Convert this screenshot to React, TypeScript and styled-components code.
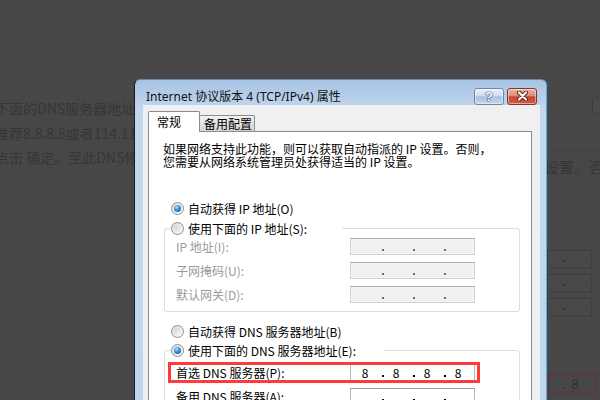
import React from 'react';
import styled, { createGlobalStyle } from 'styled-components';

const GlobalStyle = createGlobalStyle`
  html, body {
    margin: 0;
    padding: 0;
  }
  body {
    width: 600px;
    height: 400px;
    overflow: hidden;
    background: #474747;
    font-family: "Noto Sans CJK SC", "Noto Sans", sans-serif;
  }
`;

const Page = styled.div`
  position: relative;
  width: 600px;
  height: 400px;
  overflow: hidden;
  background: #474747;
`;

/* ---------- dimmed page behind the dialog ---------- */

const Backdrop = styled.div`
  display: flex;
  flex-direction: column;
  height: 100%;
`;

const Rule = styled.div`
  margin-top: 86px;
  height: 1px;
  background: #4c4c4c;
`;

const Columns = styled.div`
  display: grid;
  grid-template-columns: 1fr 53px;
`;

const Article = styled.div`
  margin: 9px 0 0 -5px;
  font-size: 14px;
  line-height: 24.5px;
  color: #363636;
  white-space: nowrap;
`;

const GhostShot = styled.div`
  display: flex;
  flex-direction: column;
  overflow: hidden;
`;

const GhostButton = styled.div`
  margin: 10px 0 0 45px;
  width: 20px;
  height: 15px;
  border: 1px solid #3d3d3d;
  border-radius: 3px;
  background: #4a4a4a;
`;

const GhostLine = styled.div`
  margin-top: 30px;
  height: 1px;
  background: #4c4c4c;
`;

const GhostText = styled.div`
  margin: 12px 0 0 -3px;
  font-size: 15px;
  line-height: 20px;
  color: #363636;
  white-space: nowrap;
`;

const GhostFields = styled.div`
  margin-top: 73px;
  display: flex;
  flex-direction: column;
  gap: 6px;
`;

const GhostField = styled.div`
  position: relative;
  width: 45px;
  height: 18px;
  box-sizing: border-box;
  border: 1px solid #3e3e3e;
  background: #494949;
  &::after {
    content: '';
    position: absolute;
    left: 15px;
    bottom: 5px;
    width: 2px;
    height: 2px;
    background: #333;
  }
`;

const GhostHighlight = styled.div`
  margin-top: 57px;
  width: 50px;
  height: 21px;
  box-sizing: border-box;
  border: 3px solid #583b3b;
  font-size: 13px;
  line-height: 15px;
  color: #303030;
  padding-left: 12px;
  white-space: nowrap;
`;

/* ---------- the dialog ---------- */

const Dialog = styled.div`
  position: absolute;
  left: 134px;
  top: 79px;
  width: 413px;
  height: 330px;
  box-sizing: border-box;
  border: 1px solid #1a1a1a;
  border-top-color: #6f86a3;
  border-right-color: #4fb3e8;
  border-radius: 6px 6px 0 0;
  background: linear-gradient(to bottom, #a7c3e4 0px, #b7cfea 18px, #c1d8ef 30px, #bfd6ee 100%);
  display: flex;
  flex-direction: column;
`;

const TitleBar = styled.div`
  height: 29px;
  box-sizing: border-box;
  padding: 7px 9px 0 11px;
  display: flex;
  align-items: center;
`;

const TitleText = styled.div`
  flex: 1;
  font-family: "Noto Sans", "Noto Sans CJK SC", sans-serif;
  font-size: 12px;
  color: #111;
  white-space: nowrap;
`;

const CaptionButtons = styled.div`
  display: flex;
  gap: 3px;
`;

const CaptionButton = styled.div<{ $variant: 'help' | 'close' }>`
  width: 30px;
  height: 17px;
  box-sizing: border-box;
  border: 1px solid ${p => (p.$variant === 'close' ? '#83372b' : '#6d87a8')};
  border-radius: 3px;
  background: ${p =>
    p.$variant === 'close'
      ? 'linear-gradient(to bottom, #ebb4a6 0%, #dc8b79 45%, #c7472f 52%, #cf5d46 100%)'
      : 'linear-gradient(to bottom, #eaf1f9 0%, #cddcee 45%, #aac3e0 52%, #c2d6ec 100%)'};
  box-shadow: inset 0 0 0 1px rgba(255, 255, 255, 0.45);
  display: flex;
  align-items: center;
  justify-content: center;
`;

const HelpGlyph = styled.span`
  font-family: "Liberation Sans", sans-serif;
  font-weight: bold;
  font-size: 13px;
  line-height: 13px;
  color: #fff;
  text-shadow: 0 0 1px #2c3e55, 0 0 1px #2c3e55, 0 0 1px #2c3e55;
`;

const ClientArea = styled.div`
  flex: 1;
  margin: 0 6px 0 8px;
  padding: 6px 8px 0 5px;
  background: #f0f0f0;
  display: flex;
  flex-direction: column;
`;

const TabStrip = styled.div`
  height: 20px;
  display: flex;
  align-items: flex-end;
`;

const Tab = styled.div<{ $active?: boolean }>`
  position: relative;
  z-index: ${p => (p.$active ? 1 : 0)};
  box-sizing: border-box;
  width: ${p => (p.$active ? 52 : 56)}px;
  height: ${p => (p.$active ? 21 : 16)}px;
  margin-bottom: ${p => (p.$active ? -1 : 0)}px;
  margin-left: ${p => (p.$active ? 0 : -1)}px;
  padding-left: ${p => (p.$active ? 8 : 4)}px;
  border: 1px solid #898c95;
  border-bottom: none;
  border-radius: 2px 2px 0 0;
  background: ${p => (p.$active ? '#fff' : 'linear-gradient(to bottom, #f2f2f2, #e2e2e2 50%, #d4d4d4)')};
  font-size: 12px;
  line-height: 14px;
  color: #000;
  display: flex;
  align-items: center;
  white-space: nowrap;
`;

const TabPanel = styled.div`
  flex: 1;
  border: 1px solid #898c95;
  background: #fff;
  padding: 10px 11px 0 14px;
  display: flex;
  flex-direction: column;
`;

const Intro = styled.p`
  margin: 0;
  font-size: 12px;
  line-height: 13px;
  color: #000;
  white-space: nowrap;
`;

const RadioRow = styled.div<{ $height: number; $gap: number }>`
  margin-top: ${p => p.$gap}px;
  height: ${p => p.$height}px;
  padding-left: 8px;
  display: flex;
  align-items: center;
  gap: 4px;
`;

const RadioDot = styled.span<{ $checked?: boolean }>`
  flex: none;
  width: 13px;
  height: 13px;
  box-sizing: border-box;
  border-radius: 50%;
  border: 1px solid #8c8e90;
  background: linear-gradient(135deg, #dcdcdc, #fbfbfb);
  display: flex;
  align-items: center;
  justify-content: center;
  &::after {
    content: '';
    width: 7px;
    height: 7px;
    border-radius: 50%;
    background: ${p =>
      p.$checked
        ? 'radial-gradient(circle at 38% 32%, #b5e0fb 0, #3f94d8 40%, #14508f 100%)'
        : 'linear-gradient(135deg, #d2d2d2, #f4f4f4)'};
  }
`;

const RadioText = styled.span`
  font-size: 12px;
  color: #000;
  white-space: nowrap;
`;

const Group = styled.fieldset`
  margin: 0 0 0 1px;
  padding: 0;
  min-width: 0;
  border: 1px solid #d5dfe5;
  border-radius: 3px;
`;

const Legend = styled.legend<{ $width: number }>`
  margin-left: 6px;
  padding: 0;
  width: ${p => p.$width}px;
  height: 20px;
  display: flex;
  align-items: center;
  gap: 4px;
`;

const FieldList = styled.div<{ $top: number }>`
  padding: ${p => p.$top}px 0 8px;
  display: flex;
  flex-direction: column;
  gap: 7px;
`;

const FieldRow = styled.div`
  position: relative;
  height: 17px;
  padding-left: 11px;
  display: grid;
  grid-template-columns: 174px 125px;
  align-items: center;
`;

const FieldLabel = styled.span<{ $disabled?: boolean }>`
  font-size: 12px;
  color: ${p => (p.$disabled ? '#9a9a9a' : '#000')};
  white-space: nowrap;
`;

const IpBox = styled.div<{ $disabled?: boolean }>`
  width: 125px;
  height: 17px;
  box-sizing: border-box;
  padding-left: 2px;
  border: 1px solid ${p => (p.$disabled ? '#cfcfcf' : '#b5b7bd')};
  border-top-color: ${p => (p.$disabled ? '#ababab' : '#9a9ca3')};
  background: ${p => (p.$disabled ? '#f0f0f0' : '#fff')};
  box-shadow: inset 0 0 0 1px ${p => (p.$disabled ? '#f7f7f7' : '#fff')};
  display: flex;
`;

const Octet = styled.span`
  width: 24px;
  font-size: 12px;
  line-height: 15px;
  text-align: center;
  color: #000;
`;

const Sep = styled.span<{ $disabled?: boolean }>`
  width: 7px;
  padding-bottom: 3px;
  box-sizing: border-box;
  display: flex;
  align-items: flex-end;
  justify-content: flex-end;
  &::after {
    content: '';
    width: 2px;
    height: 2px;
    background: ${p => (p.$disabled ? '#6d6d6d' : '#000')};
  }
`;

const Highlight = styled.div`
  position: absolute;
  left: 3px;
  top: -2px;
  width: 312px;
  height: 21px;
  box-sizing: border-box;
  border: 3px solid #ff3a3a;
  pointer-events: none;
`;

type IpProps = { value?: string[]; disabled?: boolean };

const IpField = ({ value = ['', '', '', ''], disabled }: IpProps) => (
  <IpBox $disabled={disabled}>
    {value.map((v, i) => (
      <React.Fragment key={i}>
        <Octet>{v}</Octet>
        {i < 3 && <Sep $disabled={disabled} />}
      </React.Fragment>
    ))}
  </IpBox>
);

const Radio = ({ checked, children }: { checked?: boolean; children: React.ReactNode }) => (
  <>
    <RadioDot $checked={checked} />
    <RadioText>{children}</RadioText>
  </>
);

const CloseGlyph = () => (
  <svg width="13" height="10" viewBox="0 0 13 10">
    <path d="M3 1.5 L10 8.5 M10 1.5 L3 8.5" stroke="#5b1d14" strokeWidth="4" strokeLinecap="round" />
    <path d="M3 1.5 L10 8.5 M10 1.5 L3 8.5" stroke="#fff" strokeWidth="2.2" strokeLinecap="round" />
  </svg>
);

const ipRows = ['IP 地址(I):', '子网掩码(U):', '默认网关(D):'];

export default function App() {
  return (
    <Page>
      <GlobalStyle />
      <Backdrop>
        <Rule />
        <Columns>
          <Article>
            <div>下面的DNS服务器地址：</div>
            <div>推荐8.8.8.8或者114.114.114.114</div>
            <div>点击 确定。至此DNS修改完成。</div>
          </Article>
          <GhostShot>
            <GhostButton />
            <GhostLine />
            <GhostText>设置。否则，</GhostText>
            <GhostFields>
              <GhostField />
              <GhostField />
              <GhostField />
            </GhostFields>
            <GhostHighlight>.&nbsp;&nbsp;8</GhostHighlight>
          </GhostShot>
        </Columns>
      </Backdrop>

      <Dialog>
        <TitleBar>
          <TitleText>Internet 协议版本 4 (TCP/IPv4) 属性</TitleText>
          <CaptionButtons>
            <CaptionButton $variant="help">
              <HelpGlyph>?</HelpGlyph>
            </CaptionButton>
            <CaptionButton $variant="close">
              <CloseGlyph />
            </CaptionButton>
          </CaptionButtons>
        </TitleBar>
        <ClientArea>
          <TabStrip>
            <Tab $active>常规</Tab>
            <Tab>备用配置</Tab>
          </TabStrip>
          <TabPanel>
            <Intro>
              如果网络支持此功能，则可以获取自动指派的 IP 设置。否则，
              <br />
              您需要从网络系统管理员处获得适当的 IP 设置。
            </Intro>
            <RadioRow $height={20} $gap={30}>
              <Radio checked>自动获得 IP 地址(O)</Radio>
            </RadioRow>
            <Group>
              <Legend $width={171}>
                <Radio>使用下面的 IP 地址(S):</Radio>
              </Legend>
              <FieldList $top={0}>
                {ipRows.map(label => (
                  <FieldRow key={label}>
                    <FieldLabel $disabled>{label}</FieldLabel>
                    <IpField disabled />
                  </FieldRow>
                ))}
              </FieldList>
            </Group>
            <RadioRow $height={18} $gap={10}>
              <Radio>自动获得 DNS 服务器地址(B)</Radio>
            </RadioRow>
            <Group>
              <Legend $width={213}>
                <Radio checked>使用下面的 DNS 服务器地址(E):</Radio>
              </Legend>
              <FieldList $top={4}>
                <FieldRow>
                  <FieldLabel>首选 DNS 服务器(P):</FieldLabel>
                  <IpField value={['8', '8', '8', '8']} />
                  <Highlight />
                </FieldRow>
                <FieldRow>
                  <FieldLabel>备用 DNS 服务器(A):</FieldLabel>
                  <IpField />
                </FieldRow>
              </FieldList>
            </Group>
          </TabPanel>
        </ClientArea>
      </Dialog>
    </Page>
  );
}
